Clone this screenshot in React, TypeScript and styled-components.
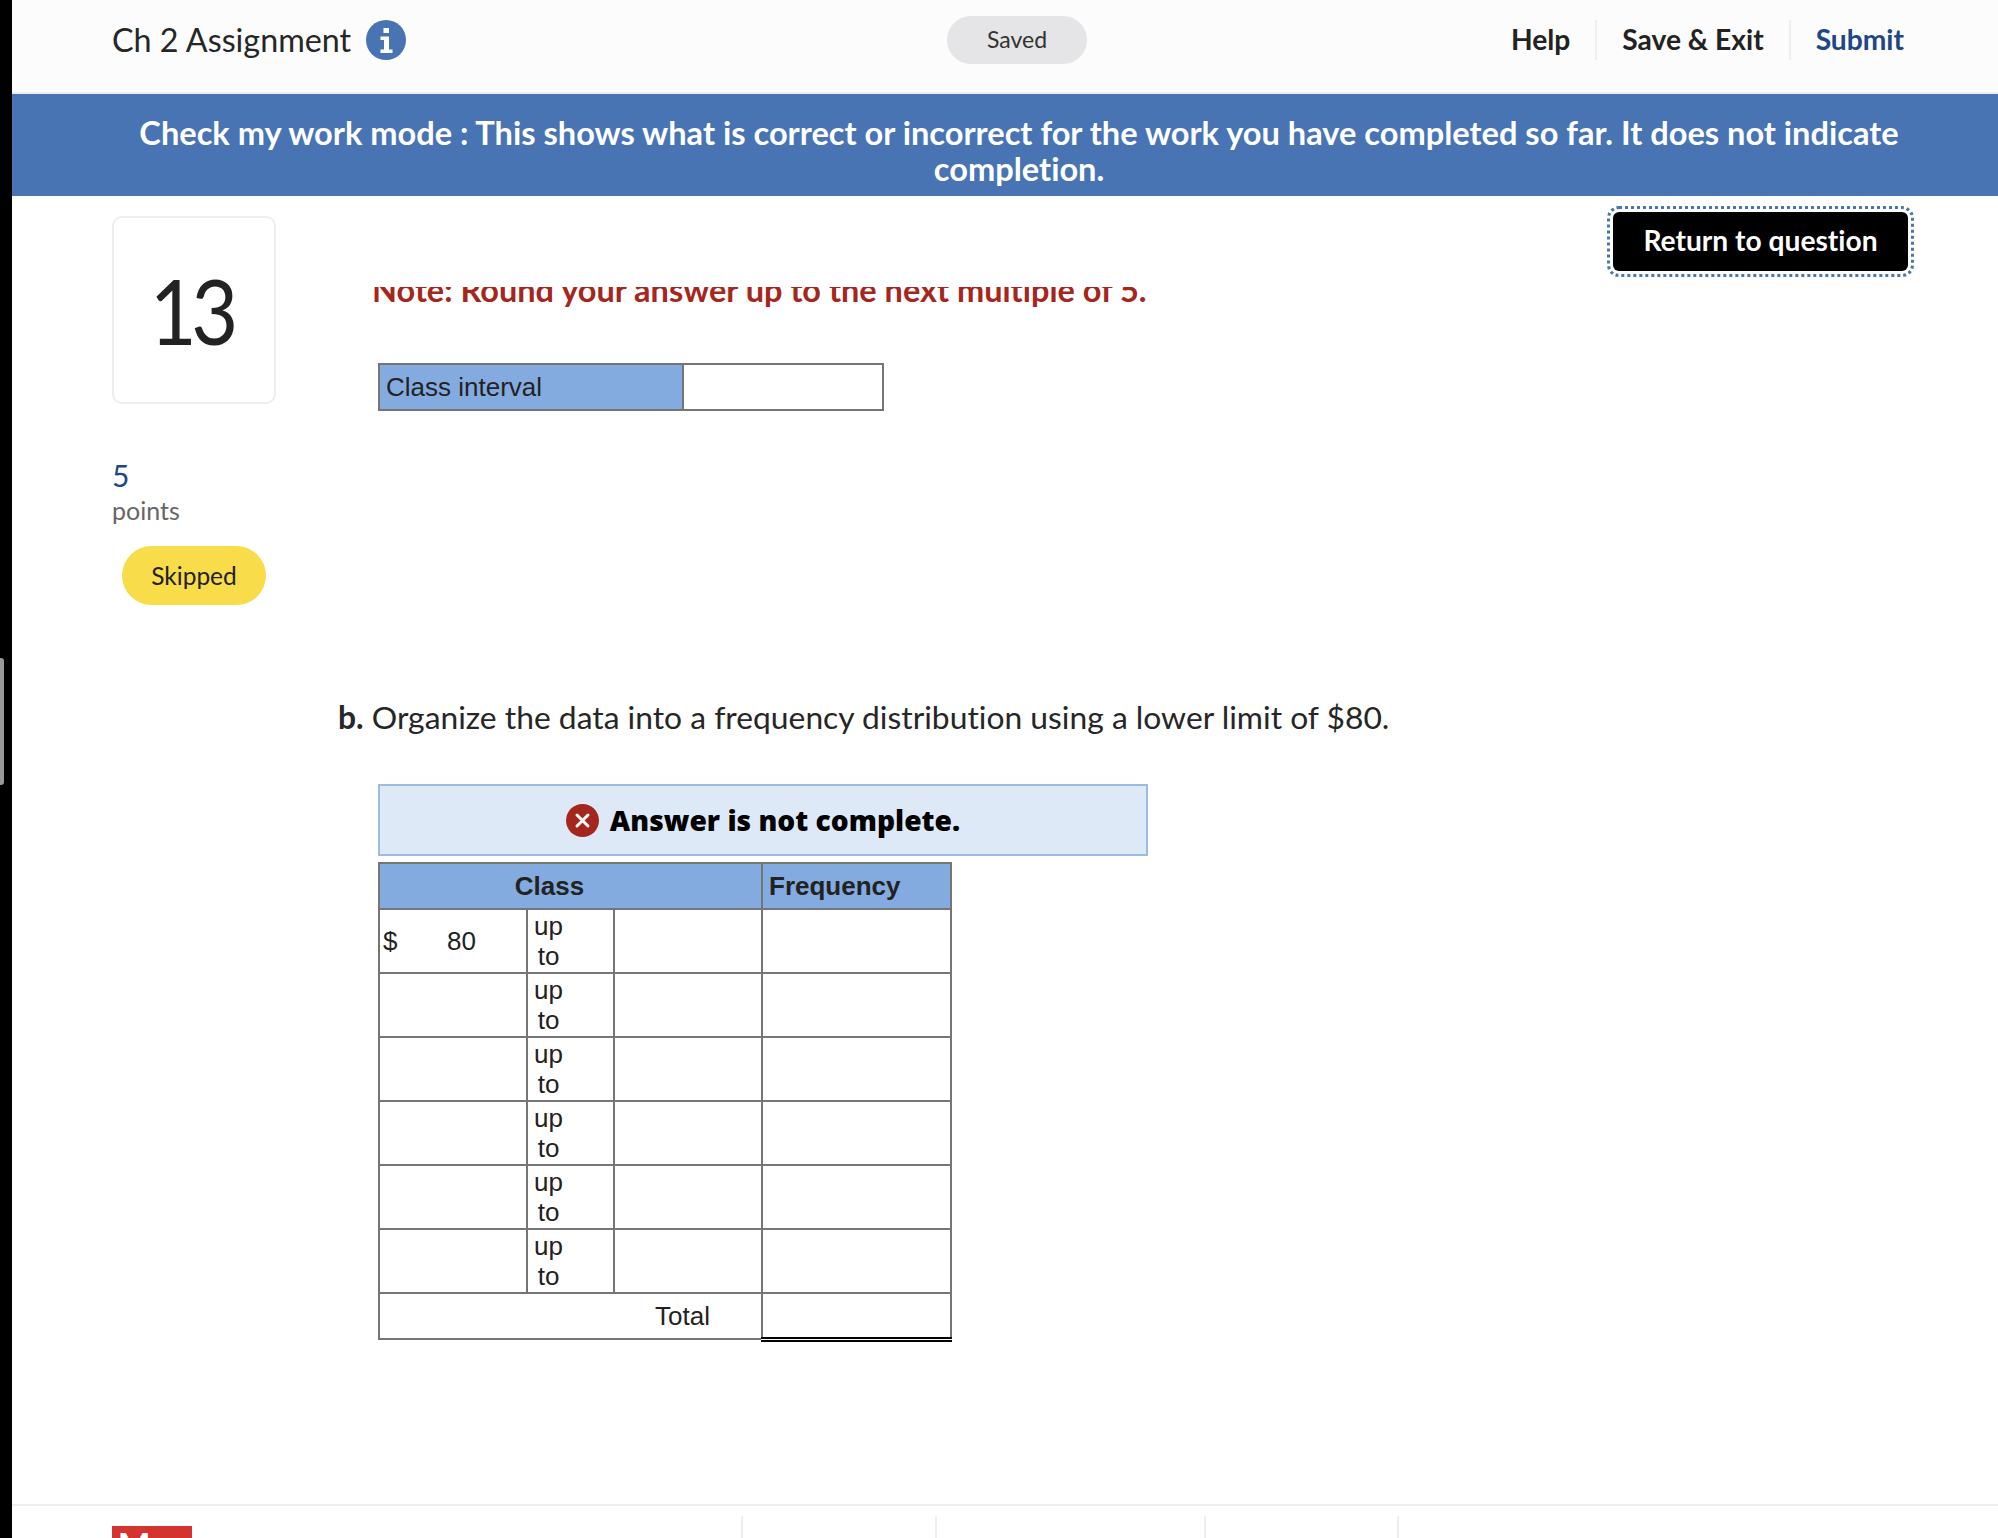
import React from 'react';
import styled, { createGlobalStyle } from 'styled-components';

const GlobalStyle = createGlobalStyle`
  html, body {
    margin: 0;
    padding: 0;
    background: #fff;
  }
  * {
    box-sizing: border-box;
  }
`;

const uiFont = `Lato, 'Open Sans', sans-serif`;
const tableFont = `'Liberation Sans', Arial, sans-serif`;

const Page = styled.div`
  display: flex;
  width: 1998px;
  height: 1538px;
  overflow: hidden;
  font-family: ${uiFont};
  font-variant-ligatures: none;
  color: #222;
`;

const LeftEdge = styled.div`
  position: relative;
  flex: 0 0 12px;
  background: #000;
`;

const EdgeThumb = styled.div`
  position: absolute;
  left: 0;
  top: 658px;
  width: 4px;
  height: 127px;
  background: #999;
  border-radius: 0 3px 3px 0;
`;

const Main = styled.div`
  flex: 1;
  min-width: 0;
  display: flex;
  flex-direction: column;
  position: relative;
`;

const TopBar = styled.header`
  flex: 0 0 94px;
  display: grid;
  grid-template-columns: 835px 140px 1fr;
  align-items: center;
  padding: 0 94px 12px 100px;
  background: #fcfcfc;
  border-bottom: 2px solid #eee;
`;

const TitleGroup = styled.div`
  display: flex;
  align-items: center;
  gap: 15px;
`;

const Title = styled.h1`
  margin: 0;
  padding-bottom: 2px;
  font-size: 32.3px;
  font-weight: 400;
  color: #262626;
`;

const InfoIcon = styled.svg`
  width: 40px;
  height: 40px;
`;

const SavedPill = styled.div`
  height: 48px;
  padding-bottom: 2px;
  display: flex;
  align-items: center;
  justify-content: center;
  background: #e5e4e7;
  border-radius: 24px;
  font-size: 23px;
  color: #333;
`;

const TopNav = styled.nav`
  display: flex;
  justify-content: flex-end;
  align-items: center;
`;

const NavLink = styled.a<{ $accent?: boolean }>`
  display: flex;
  align-items: center;
  height: 40px;
  padding: 0 25px 2px;
  font-size: 28.2px;
  font-weight: 700;
  color: ${props => (props.$accent ? '#1f4687' : '#222')};
  border-left: 2px solid #eee;
  &:first-child {
    border-left: 0;
  }
  &:last-child {
    padding-right: 0;
  }
`;

const Banner = styled.div`
  flex: 0 0 102px;
  padding: 21px 60px 0 88px;
  background: #4874b4;
  color: #fff;
  font-size: 32.6px;
  font-weight: 700;
  line-height: 36px;
  text-align: center;
`;

const Body = styled.main`
  flex: 1;
  min-height: 0;
  display: flex;
  position: relative;
`;

const SideColumn = styled.aside`
  flex: 0 0 263px;
  padding: 20px 0 0 100px;
`;

const NumberCard = styled.div`
  width: 164px;
  height: 188px;
  padding-bottom: 2px;
  display: flex;
  align-items: center;
  justify-content: center;
  border: 2px solid #eee;
  border-radius: 10px;
  font-size: 92px;
  font-weight: 400;
  letter-spacing: -6px;
  color: #222;
`;

// Lato's digits are wider than the reference face, so narrow them a little
const NumberText = styled.span`
  display: inline-block;
  transform: translateX(-3px) scaleX(0.88);
`;

const Points = styled.div`
  margin-top: 53px;
  font-size: 30px;
  line-height: 36px;
  color: #1f4687;
`;

const PointsLabel = styled.div`
  margin-top: -1px;
  font-size: 25px;
  line-height: 36px;
  color: #666;
`;

const StatusPill = styled.div`
  width: 144px;
  height: 59px;
  margin: 18px 0 0 10px;
  display: flex;
  align-items: center;
  justify-content: center;
  background: #f9dc4a;
  border-radius: 30px;
  font-size: 24.5px;
  color: #222;
`;

const ReturnButton = styled.button`
  position: absolute;
  top: 16px;
  right: 90px;
  width: 295px;
  height: 59px;
  padding: 0 0 4px;
  border: 0;
  border-radius: 6px;
  background: #000;
  color: #fff;
  font-family: ${uiFont};
  font-variant-ligatures: none;
  font-size: 28.2px;
  font-weight: 700;
  outline: 3px dotted #4874b4;
  outline-offset: 3px;
`;

const QuestionPane = styled.section`
  flex: 1;
  min-width: 0;
  margin-top: 91px;
  overflow: hidden;
`;

const QuestionScroll = styled.div`
  margin-top: -15px;
  padding-left: 62px;
`;

const Note = styled.p`
  margin: 0 0 0 34px;
  height: 36px;
  font-size: 32.5px;
  font-weight: 700;
  line-height: 36px;
  color: #a5261c;
`;

const GridTable = styled.table`
  border-collapse: collapse;
  table-layout: fixed;
  font-family: ${tableFont};
  font-size: 26px;
  line-height: 30px;
  color: #222;
  td, th {
    border: 2px solid #757575;
    padding: 0;
  }
`;

const IntervalTable = styled(GridTable)`
  width: 506px;
  margin: 55px 0 0 40px;
`;

const HeadCell = styled.td<{ $width?: number }>`
  height: 46px;
  padding: 0 6px !important;
  background: #84abe0;
  font-weight: 400;
  text-align: left;
  width: ${props => (props.$width ? `${props.$width}px` : 'auto')};
`;

const ClassHead = styled(HeadCell)`
  font-weight: 700;
  text-align: center;
  padding-right: 48px !important;
`;

const FrequencyHead = styled(HeadCell)`
  font-weight: 700;
`;

const PartPrompt = styled.p`
  margin: 286px 0 0 0;
  font-size: 31.8px;
  line-height: 40px;
  color: #262626;
  b {
    font-weight: 700;
  }
`;

const AnswerNotice = styled.div`
  width: 770px;
  height: 72px;
  margin: 47px 0 0 40px;
  display: flex;
  align-items: center;
  justify-content: center;
  gap: 11px;
  background: #dde9f7;
  border: 2px solid #9cbbdf;
  font-family: 'Open Sans', Lato, sans-serif;
  font-size: 28.2px;
  font-weight: 800;
  color: #000;
`;

const NoticeIcon = styled.svg`
  width: 33px;
  height: 33px;
`;

const FrequencyTable = styled(GridTable)`
  width: 572px;
  margin: 6px 0 0 40px;
`;

const Row = styled.tr`
  height: 64px;
`;

const AmountInner = styled.div`
  display: flex;
  justify-content: space-between;
  padding: 0 50px 0 3px;
`;

const UpToCell = styled.td`
  text-align: center;
  padding: 0 44px 0 0 !important;
`;

const TotalRow = styled.tr`
  height: 46px;
`;

const TotalLabel = styled.td`
  text-align: right;
  padding-right: 51px !important;
`;

const TotalValue = styled.td`
  border-bottom: 5px double #000 !important;
`;

const Footer = styled.footer`
  flex: 0 0 34px;
  min-height: 0;
  overflow: hidden;
  display: flex;
  padding: 10px 0 0 100px;
  border-top: 2px solid #eee;
`;

const Logo = styled.div`
  flex: 0 0 80px;
  height: 80px;
  margin-top: 10px;
  padding: 2px 0 0 6px;
  background: #d3342f;
  color: #fff;
  font-size: 34px;
  font-weight: 900;
  line-height: 1;
`;

const FooterLinks = styled.div`
  margin-left: 549px;
  display: flex;
`;

const FooterLink = styled.div<{ $width: number }>`
  width: ${props => props.$width}px;
  height: 40px;
  border-left: 2px solid #eee;
`;

const ROWS = [0, 1, 2, 3, 4, 5];

function App() {
  return (
    <Page>
      <GlobalStyle />
      <LeftEdge>
        <EdgeThumb />
      </LeftEdge>
      <Main>
        <TopBar>
          <TitleGroup>
            <Title>Ch 2 Assignment</Title>
            <InfoIcon viewBox="0 0 40 40">
              <circle cx="20" cy="20" r="20" fill="#4874b4" />
              <rect x="17.5" y="8" width="5.5" height="5" fill="#fff" />
              <path d="M14.5 16.5h8.5v13h3.5v3.5H14.5v-3.5H18v-9.5h-3.5z" fill="#fff" />
            </InfoIcon>
          </TitleGroup>
          <SavedPill>Saved</SavedPill>
          <TopNav>
            <NavLink>Help</NavLink>
            <NavLink>Save &amp; Exit</NavLink>
            <NavLink $accent>Submit</NavLink>
          </TopNav>
        </TopBar>

        <Banner>
          Check my work mode : This shows what is correct or incorrect for the work you have completed so far. It does not indicate completion.
        </Banner>

        <Body>
          <SideColumn>
            <NumberCard>
              <NumberText>13</NumberText>
            </NumberCard>
            <Points>5</Points>
            <PointsLabel>points</PointsLabel>
            <StatusPill>Skipped</StatusPill>
          </SideColumn>

          <QuestionPane>
            <QuestionScroll>
              <Note>Note: Round your answer up to the next multiple of 5.</Note>
              <IntervalTable>
                <tbody>
                  <tr>
                    <HeadCell $width={304}>Class interval</HeadCell>
                    <td />
                  </tr>
                </tbody>
              </IntervalTable>

              <PartPrompt>
                <b>b.</b> Organize the data into a frequency distribution using a lower limit of $80.
              </PartPrompt>

              <AnswerNotice>
                <NoticeIcon viewBox="0 0 33 33">
                  <circle cx="16.5" cy="16.5" r="16.5" fill="#a5261c" />
                  <path d="M11 11l11 11M22 11l-11 11" stroke="#fff" strokeWidth="3" strokeLinecap="round" />
                </NoticeIcon>
                Answer is not complete.
              </AnswerNotice>

              <FrequencyTable>
                <colgroup>
                  <col width={148} />
                  <col width={87} />
                  <col width={148} />
                  <col width={189} />
                </colgroup>
                <thead>
                  <tr>
                    <ClassHead as="th" colSpan={3}>Class</ClassHead>
                    <FrequencyHead as="th">Frequency</FrequencyHead>
                  </tr>
                </thead>
                <tbody>
                  {ROWS.map(row => (
                    <Row key={row}>
                      <td>
                        {row === 0 && (
                          <AmountInner>
                            <span>$</span>
                            <span>80</span>
                          </AmountInner>
                        )}
                      </td>
                      <UpToCell>up to</UpToCell>
                      <td />
                      <td />
                    </Row>
                  ))}
                  <TotalRow>
                    <TotalLabel colSpan={3}>Total</TotalLabel>
                    <TotalValue />
                  </TotalRow>
                </tbody>
              </FrequencyTable>
            </QuestionScroll>
          </QuestionPane>

          <ReturnButton>Return to question</ReturnButton>
        </Body>

        <Footer>
          <Logo>Mc</Logo>
          <FooterLinks>
            <FooterLink $width={194} />
            <FooterLink $width={269} />
            <FooterLink $width={193} />
            <FooterLink $width={193} />
          </FooterLinks>
        </Footer>
      </Main>
    </Page>
  );
}

export default App;
